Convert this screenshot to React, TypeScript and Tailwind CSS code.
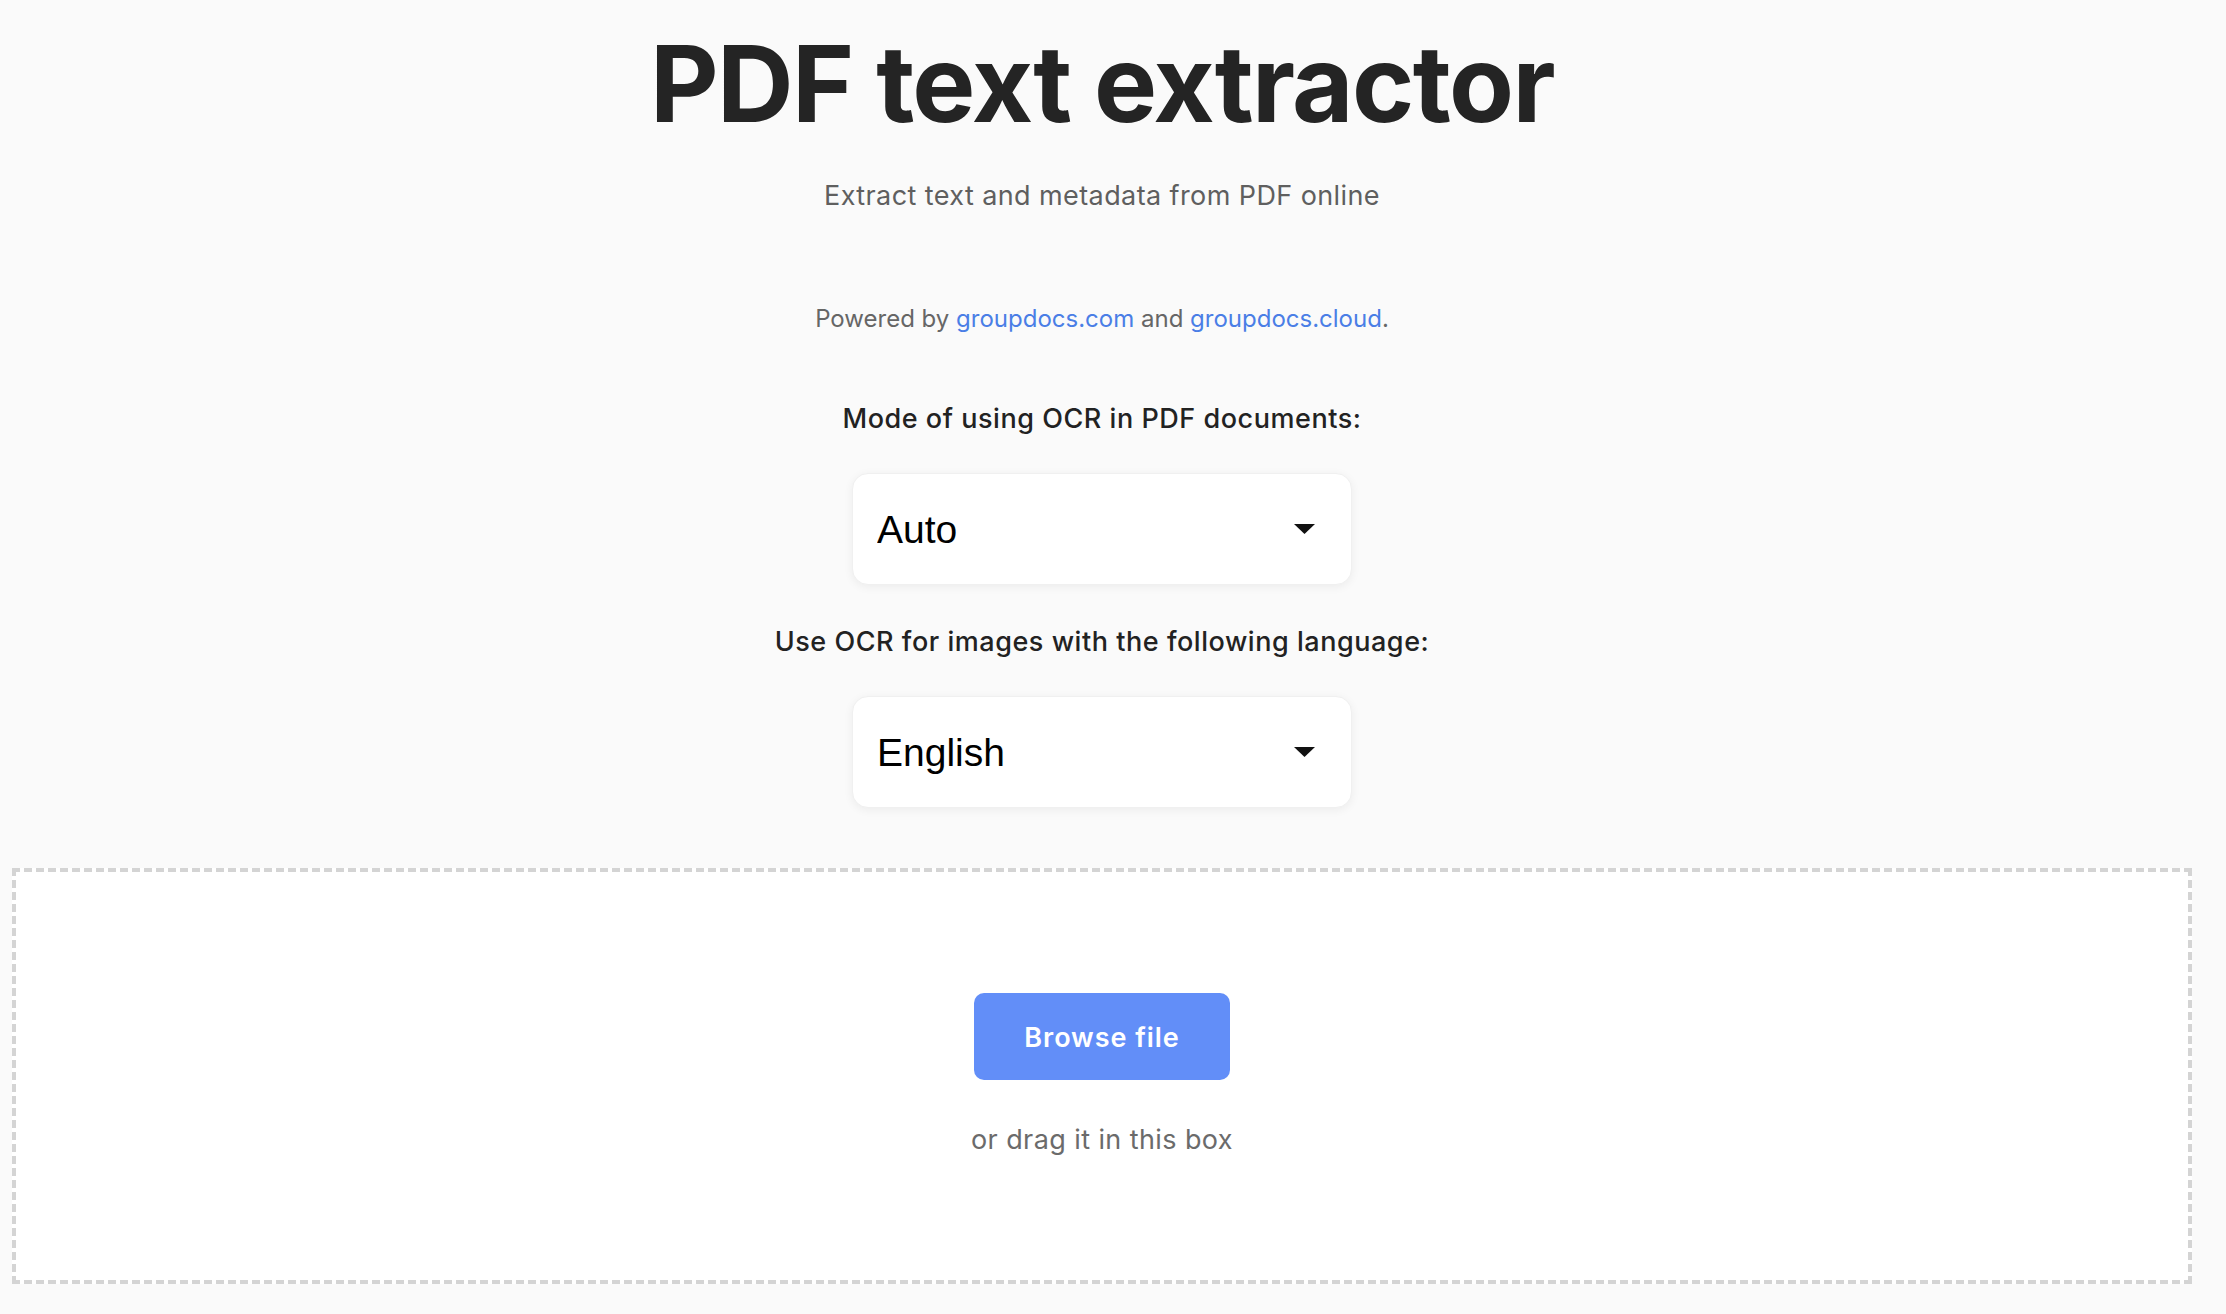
import { useState } from "react";

type Option = { value: string; label: string };

const ocrModes: Option[] = [
  { value: "auto", label: "Auto" },
  { value: "always", label: "Always" },
  { value: "never", label: "Never" },
];

const languages: Option[] = [
  { value: "en", label: "English" },
  { value: "de", label: "German" },
  { value: "fr", label: "French" },
  { value: "es", label: "Spanish" },
];

function SelectBox({ options, value, onChange }: { options: Option[]; value: string; onChange: (v: string) => void }) {
  return (
    <div className="relative h-[112px] w-[500px] rounded-[16px] border border-[#f0f0f0] bg-white shadow-[0_2px_10px_rgba(0,0,0,0.06)]">
      <select
        value={value}
        onChange={(e) => onChange(e.target.value)}
        className="h-full w-full appearance-none rounded-[16px] bg-transparent pl-[24px] pr-[70px] pt-[2px] text-[39px] text-black outline-none"
        style={{ fontFamily: '"Liberation Sans", Arial, sans-serif' }}
      >
        {options.map((o) => (
          <option key={o.value} value={o.value}>
            {o.label}
          </option>
        ))}
      </select>
      {/* caret */}
      <svg
        className="pointer-events-none absolute right-[36px] top-1/2 -translate-y-1/2"
        width="21"
        height="10"
        viewBox="0 0 21 10"
      >
        <path d="M0 0h21L10.5 10z" fill="#111" />
      </svg>
    </div>
  );
}

export default function App() {
  const [mode, setMode] = useState("auto");
  const [lang, setLang] = useState("en");

  return (
    <div
      className="min-h-screen bg-[#fafafa] text-[#222]"
      style={{ fontFamily: 'Inter, "Noto Sans", sans-serif' }}
    >
      <div className="flex w-[2204px] flex-col items-center pb-[31px]">
        <h1 className="mt-[31px] text-[106px] font-bold leading-[106px] tracking-[-0.015em] text-[#242424]">
          PDF text extractor
        </h1>
        <p className="mt-[41px] text-[27px] leading-[36px] tracking-[0.015em] text-[#5f5f5f]">
          Extract text and metadata from PDF online
        </p>

        <p className="mt-[89px] text-[24px] leading-[32px] text-[#666]">
          Powered by{" "}
          <a href="#" className="text-[#4a7ee6]">
            groupdocs.com
          </a>{" "}
          and{" "}
          <a href="#" className="text-[#4a7ee6]">
            groupdocs.cloud
          </a>
          .
        </p>

        <label className="mt-[66px] text-[27px] font-medium leading-[36px] tracking-[0.02em] text-[#222]">
          Mode of using OCR in PDF documents:
        </label>
        <div className="mt-[36px]">
          <SelectBox options={ocrModes} value={mode} onChange={setMode} />
        </div>

        <label className="mt-[39px] text-[27px] font-medium leading-[36px] tracking-[0.02em] text-[#222]">
          Use OCR for images with the following language:
        </label>
        <div className="mt-[36px]">
          <SelectBox options={languages} value={lang} onChange={setLang} />
        </div>

        <div className="mt-[60px] flex w-[2180px] flex-col items-center border-4 border-dashed border-[#d4d4d4] bg-white pb-[122px] pt-[121px]">
          <button
            type="button"
            className="h-[87px] w-[256px] rounded-[10px] bg-[#628ef8] pt-[3px] text-[27px] font-semibold tracking-[0.035em] text-white"
          >
            Browse file
          </button>
          <p className="mt-[42px] text-[27px] leading-[36px] tracking-[0.015em] text-[#6b6b6b]">or drag it in this box</p>
        </div>
      </div>
    </div>
  );
}
